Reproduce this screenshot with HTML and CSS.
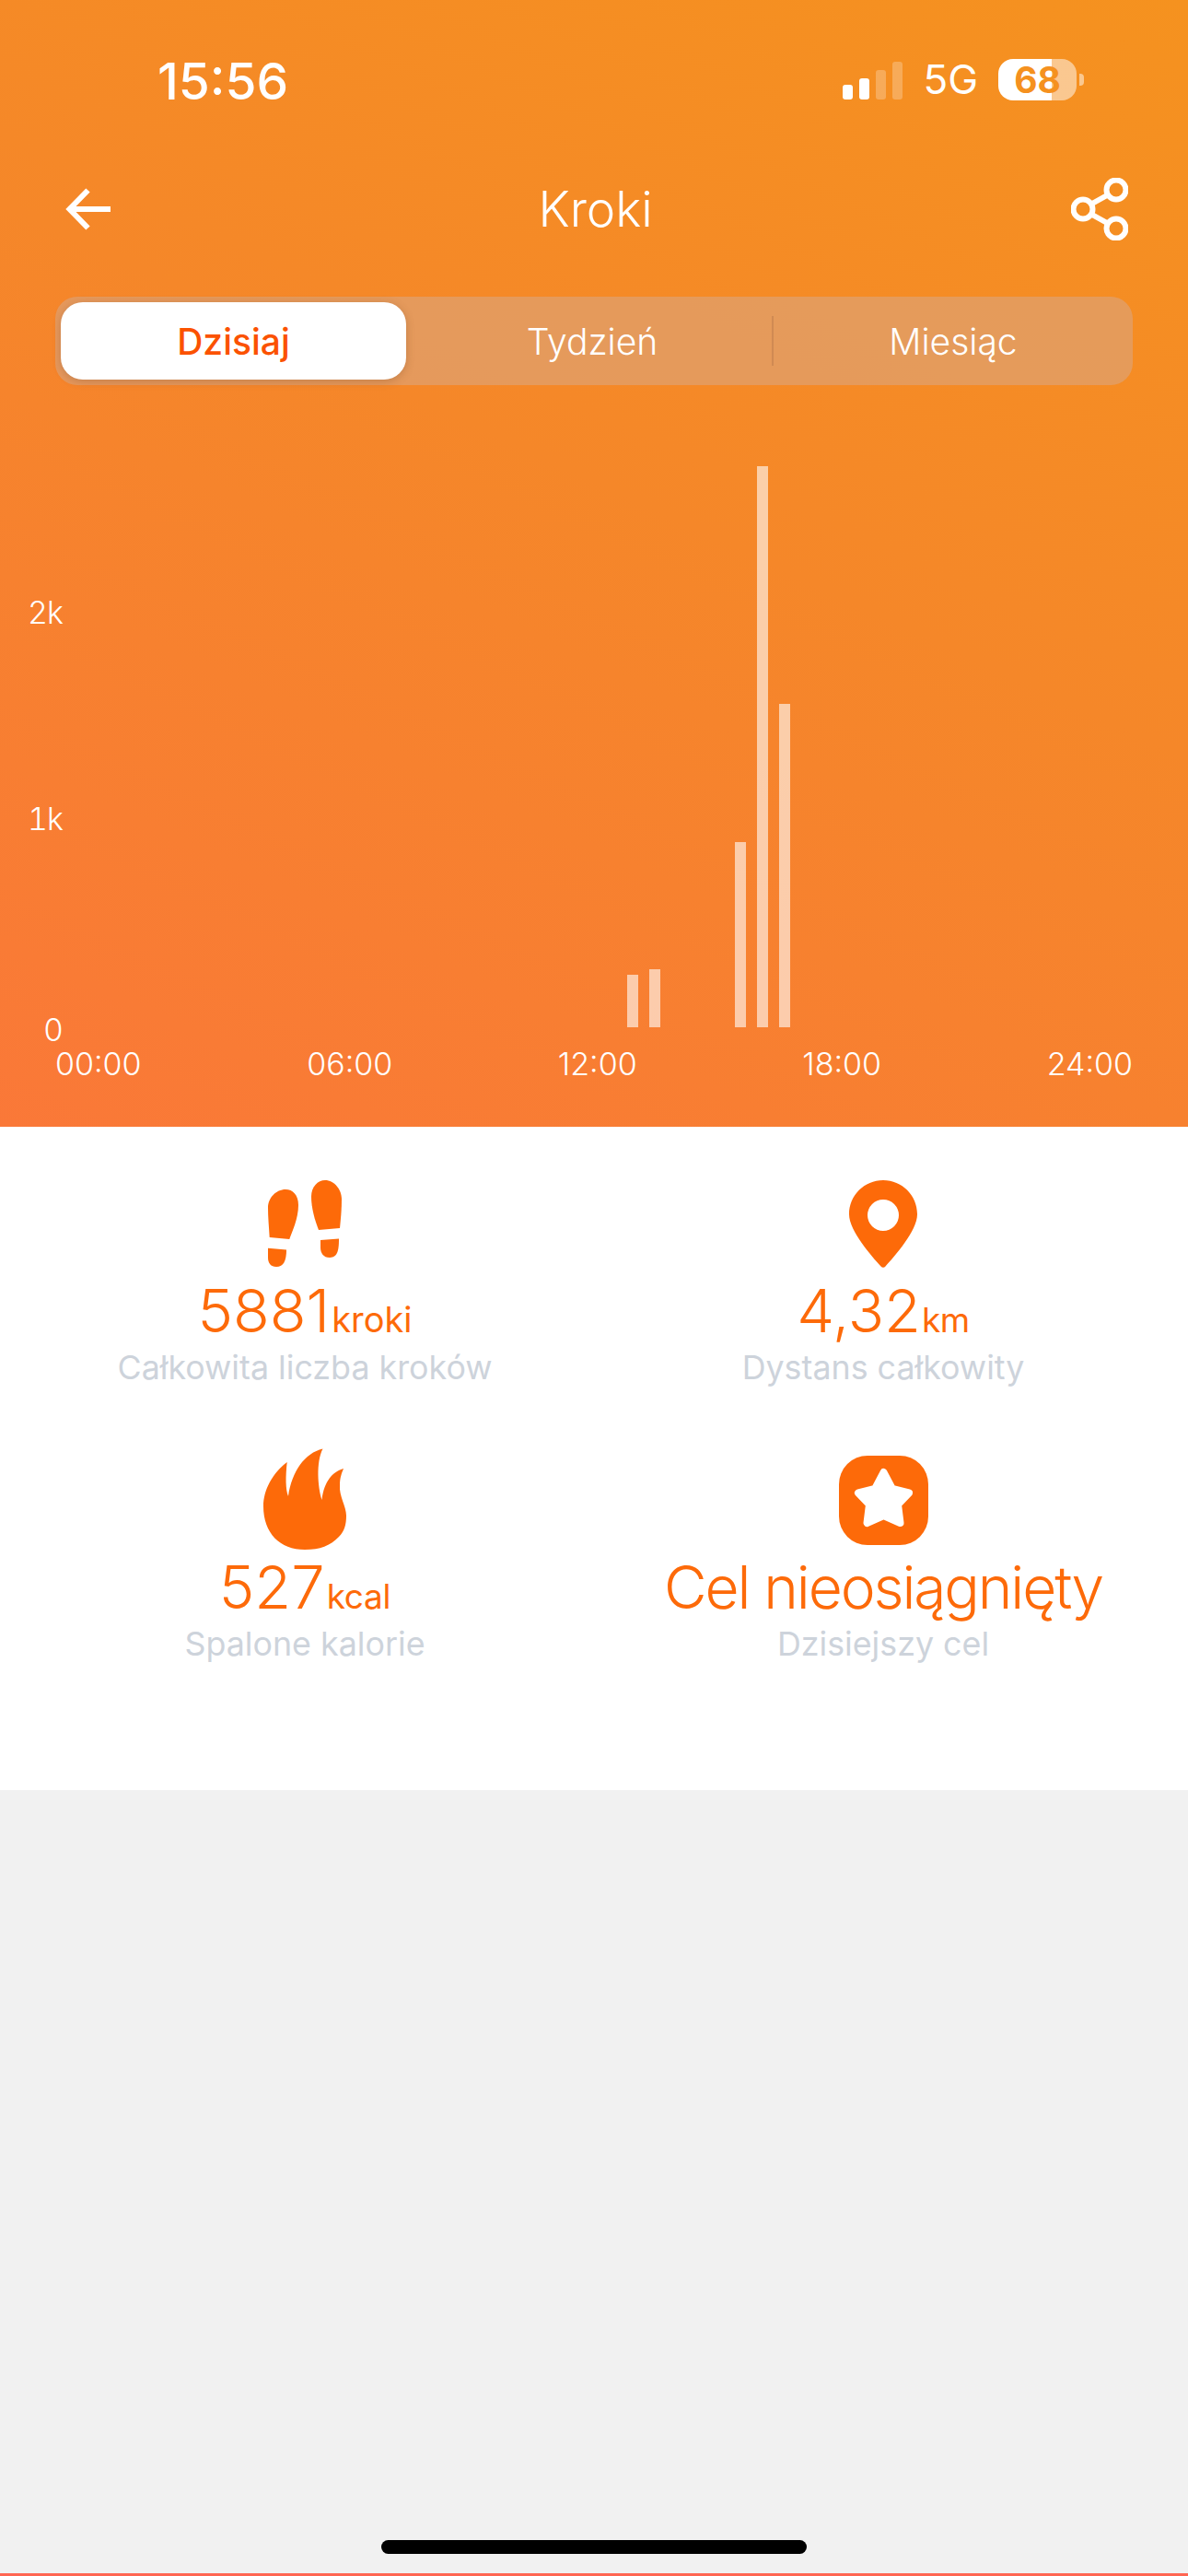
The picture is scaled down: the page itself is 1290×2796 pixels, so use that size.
FILE: index.html
```html
<!DOCTYPE html>
<html lang="pl">
<head>
<meta charset="utf-8">
<title>Kroki</title>
<link rel="stylesheet" href="styles.css">
</head>
<body>
<div class="screen">
  <section class="hero">
    <div class="status">
      <span class="time">15:56</span>
      <div class="status-right">
        <div class="signal">
          <i class="sig sig-1"></i><i class="sig sig-2"></i><i class="sig sig-3 off"></i><i class="sig sig-4 off"></i>
        </div>
        <span class="net">5G</span>
        <div class="battery"><div class="battery-body"><span class="battery-text">68</span></div><i class="battery-nub"></i></div>
      </div>
    </div>
    <div class="nav">
      <svg class="arrow" width="52" height="46" viewBox="0 0 52 46"><path d="M52 23H8M27.500 2.500L7.500 23L27.500 43.500" fill="none" stroke="#fff" stroke-width="6"/></svg>
      <h1 class="title">Kroki</h1>
      <svg class="share" width="62" height="68" viewBox="0 0 62 68"><g fill="none" stroke="#fff" stroke-width="6"><circle cx="13" cy="34" r="10.500"/><circle cx="49" cy="13" r="10.500"/><circle cx="49" cy="55" r="10.500"/><path d="M22 28.500L40 18.500M22 39.500L40 49.500"/></g></svg>
    </div>
    <div class="tabs">
      <div class="tab tab-active">Dzisiaj</div>
      <div class="tab tab-mid">Tydzień</div>
      <i class="tab-divider"></i>
      <div class="tab tab-last">Miesiąc</div>
    </div>
    <div class="chart">
      <div class="y-axis">
        <span class="y-label y-2k">2k</span>
        <span class="y-label y-1k">1k</span>
        <span class="y-label">0</span>
      </div>
      <div class="bars">
        <div class="bar-group">
          <i class="bar" style="height:57px"></i>
          <i class="bar" style="height:63px"></i>
        </div>
        <div class="bar-group">
          <i class="bar" style="height:201px"></i>
          <i class="bar" style="height:609px"></i>
          <i class="bar" style="height:351px"></i>
        </div>
      </div>
    </div>
    <div class="x-axis">
      <span>00:00</span><span>06:00</span><span>12:00</span><span>18:00</span><span>24:00</span>
    </div>
  </section>
  <section class="stats">
    <div class="stat">
      <div class="stat-icon">
        <svg width="80" height="94" viewBox="0 0 80 94"><g fill="#fd6a09"><path d="M1.700 62L23.300 64C26 56 33 42 33 27C33 16 27 10 19 10C9 10 0 19 0 30C0 40 1 50 1.700 62Z"/><path d="M0 73.800L20 75.400C20 87 17 94 9 94C3 94 0 90 0 84Z"/><path d="M78 52L55 54C51 44 47 30 47 18C47 7 54 0 62 0C72 0 80 10 80 21C80 32 79 42 78 52Z"/><path d="M57 65L77 63.600C77 75 76 84 67 84C60 84 57 79 57 73Z"/></g></svg>
      </div>
      <div class="stat-value"><span class="num">5881</span><span class="unit">kroki</span></div>
      <div class="stat-label">Całkowita liczba kroków</div>
    </div>
    <div class="stat">
      <div class="stat-icon">
        <svg width="74" height="95" viewBox="0 0 74 95"><path fill="#fd6a09" fill-rule="evenodd" d="M37 0C16.500 0 0 16.500 0 37C0 55 25 83 34.500 93.500C36 95.300 38 95.300 39.500 93.500C49 83 74 55 74 37C74 16.500 57.500 0 37 0ZM37 21A17 17 0 1 1 37 55A17 17 0 1 1 37 21Z"/></svg>
      </div>
      <div class="stat-value"><span class="num">4,32</span><span class="unit unit-km">km</span></div>
      <div class="stat-label">Dystans całkowity</div>
    </div>
    <div class="stat">
      <div class="stat-icon icon-flame">
        <svg width="90" height="110" viewBox="0 0 90 110"><path fill="#fd6a09" d="M64.500 0.500C45 5 31 25 27 52C24 45 24 30 25.700 15C10 27 0 45 0 63C0 92 18 110 45 110C62 110 72 106 82 96C88 90 90 83 90 73C90 63 82 52 83 40C83 32 85 27 87 22C76 25 66 35 63.500 56C59 42 57 15 64.500 0.500Z"/></svg>
      </div>
      <div class="stat-value"><span class="num">527</span><span class="unit unit-kcal">kcal</span></div>
      <div class="stat-label">Spalone kalorie</div>
    </div>
    <div class="stat">
      <div class="stat-icon">
        <svg width="97" height="97" viewBox="0 0 97 97"><rect width="97" height="97" rx="31" fill="#fd6a09"/><polygon points="48.500,18 58,36 76,40.500 64,53 66.500,73 48.500,65 30.500,73 33,53 21,40.500 39,36" fill="#fff" stroke="#fff" stroke-width="8" stroke-linejoin="round"/></svg>
      </div>
      <div class="stat-value"><span class="num num-text">Cel nieosiągnięty</span></div>
      <div class="stat-label">Dzisiejszy cel</div>
    </div>
  </section>
  <div class="rest">
    <i class="home-bar"></i>
  </div>
  <div class="edge"></div>
</div>
</body>
</html>
```

FILE: styles.css
```css
* { box-sizing: border-box; }
html, body { margin: 0; padding: 0; }
body { font-family: Inter, "Noto Sans", sans-serif; background: #f1f1f1; }
.screen { width: 1290px; height: 2796px; display: flex; flex-direction: column; overflow: hidden; }

.hero { height: 1223px; background: linear-gradient(205deg, #f5921f 0%, #f58729 45%, #fa7838 100%); color: #fff; padding-top: 64px; }

.status { height: 45px; display: flex; justify-content: space-between; align-items: center; padding: 0 113px 0 171px; }
.time { font-size: 55px; font-weight: 500; line-height: 48px; margin-top: 2px; }
.status-right { display: flex; align-items: center; }
.signal { display: flex; align-items: flex-end; gap: 7px; height: 41px; margin-top: 1px; }
.sig { display: block; width: 11px; background: #fff; border-radius: 3px; }
.sig-1 { height: 16px; }
.sig-2 { height: 23px; }
.sig-3 { height: 32px; }
.sig-4 { height: 41px; }
.off { background: rgba(255,255,255,.25); }
.net { font-size: 44px; line-height: 45px; margin-left: 22px; font-weight: 400; }
.battery { display: flex; align-items: center; margin-left: 22px; }
.battery-body { width: 85px; height: 45px; border-radius: 16px; background: linear-gradient(90deg, #fff 0 58px, rgba(255,255,255,.5) 58px); display: flex; align-items: center; justify-content: center; }
.battery-text { font-size: 39px; font-weight: 700; color: #f5911f; line-height: 45px; }
.battery-nub { display: block; width: 5px; height: 13px; margin-left: 3px; background: rgba(255,255,255,.5); border-radius: 0 4px 4px 0; }

.nav { height: 70px; margin-top: 83px; display: grid; grid-template-columns: 1fr auto 1fr; align-items: center; padding: 0 65px 0 68px; }
.arrow { justify-self: start; }
.share { justify-self: end; }
.title { margin: 0; font-size: 53px; font-weight: 300; line-height: 70px; }

.tabs { margin: 60px 60px 0; height: 96px; padding: 6px 0 6px 6px; border-radius: 24px; background: rgba(220,165,125,.62); display: flex; align-items: center; }
.tab { height: 84px; display: flex; align-items: center; justify-content: center; font-size: 39px; font-weight: 300; }
.tab-active { width: 375px; background: #fff; color: #fb5200; font-weight: 500; border-radius: 24px; box-shadow: 0 2px 10px rgba(120,70,30,.3); }
.tab-mid { width: 397px; padding-left: 7px; }
.tab-divider { display: block; width: 2px; height: 54px; background: rgba(170,110,70,.35); }
.tab-last { flex: 1; }

.chart { height: 718px; display: flex; }
.y-axis { width: 68px; display: flex; flex-direction: column; justify-content: flex-end; align-items: flex-end; margin-bottom: -2px; }
.y-label { font-size: 34px; font-weight: 300; line-height: 40px; letter-spacing: -1px; font-variant-numeric: tabular-nums; }
.y-2k { margin-bottom: 184px; }
.y-1k { margin-bottom: 189px; }
.bars { display: flex; align-items: flex-end; gap: 81px; padding: 0 0 21px 613px; }
.bar-group { display: flex; align-items: flex-end; gap: 12px; }
.bar { display: block; width: 12px; background: rgba(255,255,255,.6); }

.x-axis { display: flex; justify-content: space-between; padding: 0 60px; font-size: 34px; font-weight: 300; line-height: 38px; }

.stats { height: 720px; background: #fff; padding: 49px 17px 0; display: grid; grid-template-columns: 1fr 1fr; grid-auto-rows: 300px; }
.stat { display: flex; flex-direction: column; align-items: center; }
.stat-icon { height: 112px; display: flex; align-items: center; justify-content: center; }
.icon-flame { margin-top: -1px; margin-bottom: 1px; }
.stat-value { height: 78px; padding-top: 2px; color: #fd6a09; display: flex; align-items: baseline; line-height: 74px; }
.num { font-size: 65px; font-weight: 300; }
.num-text { font-size: 64px; letter-spacing: -2.1px; }
.unit { font-size: 38px; font-weight: 400; margin-left: 2px; }
.unit-km { margin-left: 1px; font-size: 37px; letter-spacing: -.5px; }
.unit-kcal { margin-left: 2px; font-size: 37px; letter-spacing: -.3px; }
.stat-label { font-size: 35.8px; line-height: 44px; color: #cdd3db; font-weight: 400; }

.rest { flex: 1; display: flex; align-items: flex-end; justify-content: center; padding-bottom: 21px; }
.home-bar { display: block; width: 462px; height: 15px; border-radius: 8px; background: #000; }
.edge { height: 3px; background: #ff6652; }
```
